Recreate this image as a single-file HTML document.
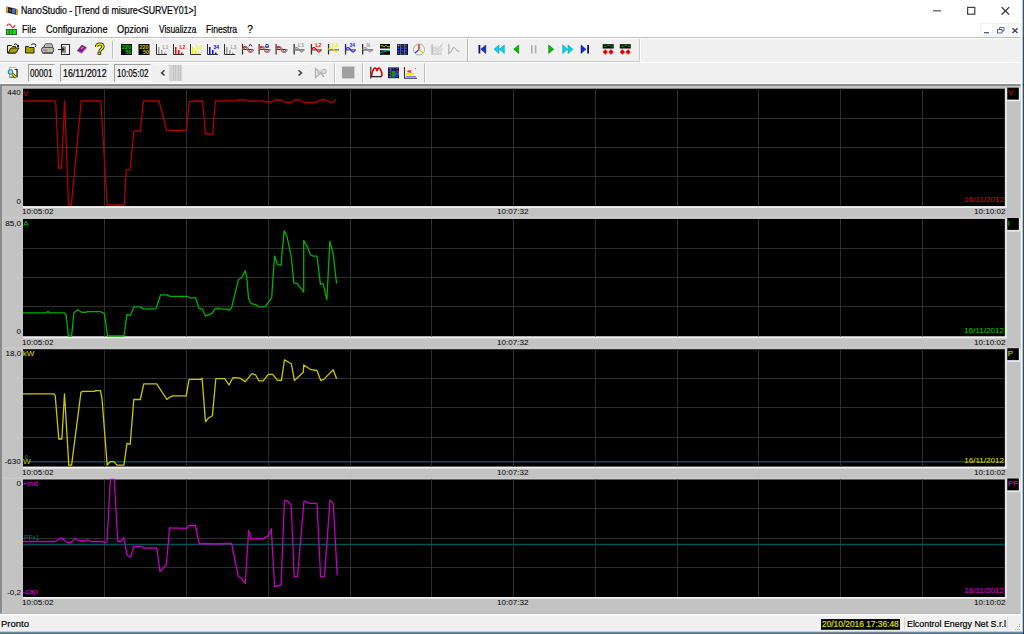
<!DOCTYPE html><html><head><meta charset="utf-8"><style>
html,body{margin:0;padding:0;}
body{width:1024px;height:634px;overflow:hidden;position:relative;background:#f0f0f0;font-family:'Liberation Sans', sans-serif;}
.t{position:absolute;white-space:nowrap;line-height:1;transform-origin:0 0;}
.u{-webkit-text-stroke:0.2px currentColor;}
.r{position:absolute;}
svg{position:absolute;left:0;top:0;}
</style></head><body>
<div class="r" style="left:0px;top:0px;width:1024px;height:37px;background:#ffffff;"></div>
<div class="r" style="left:0px;top:37px;width:1024px;height:1px;background:#bdbdbd;"></div>
<div class="r" style="left:0px;top:38px;width:1024px;height:1px;background:#ffffff;"></div>
<svg width="24" height="40" style="left:0;top:0"><path d="M6.6 6.6 L18 9.2 L17.6 15 L6.3 12.4 z" fill="#181818"/><path d="M6.6 6.6 L8.2 7 L7.9 12.8 L6.3 12.4 z" fill="#e8a010"/><path d="M16.4 8.8 L18 9.2 L17.6 15 L16 14.6 z" fill="#f0c020"/><path d="M12 8.5 L15.6 9.3 L15.3 13.8 L11.8 13 z" fill="#4a70d0"/><path d="M9 9 h2 v3 h-2 z" fill="#505030"/><path d="M6.8 26 Q8.3 23 10 24.5 L12 27 Q13.5 28.6 15 25" stroke="#f02020" stroke-width="1.1" fill="none"/><rect x="6" y="29" width="11" height="6" fill="#404040"/><rect x="6.8" y="29.8" width="9.4" height="4.4" fill="#10e010"/><path d="M9.2 30.2 v3.6 M12.2 30.2 v3.6" stroke="#083008" stroke-width="0.7"/></svg>
<svg width="100" height="40" style="left:924px;top:0"><rect x="9" y="10.2" width="8" height="1.2" fill="#505050"/><rect x="43.6" y="7.4" width="7.2" height="6.8" fill="none" stroke="#404040" stroke-width="1.2"/><path d="M77.6 7.2 L85.2 14.6 M85.2 7.2 L77.6 14.6" stroke="#202020" stroke-width="1.15"/></svg>
<div class="r" style="left:980px;top:23px;width:13px;height:13px;background:#ffffff;box-shadow: inset 0 0 0 1px #f0f0f0;"></div>
<div class="r" style="left:994px;top:23px;width:13px;height:13px;background:#ffffff;box-shadow: inset 0 0 0 1px #f0f0f0;"></div>
<div class="r" style="left:1008px;top:23px;width:13px;height:13px;background:#ffffff;box-shadow: inset 0 0 0 1px #f0f0f0;"></div>
<svg width="44" height="16" style="left:980px;top:22px"><rect x="4" y="10" width="5" height="1.3" fill="#4a5a7a"/><rect x="17.5" y="7.5" width="4.5" height="3.5" fill="none" stroke="#5a6a8a" stroke-width="1"/><path d="M19.5 7.5 V5.5 H24 V9 H22" fill="none" stroke="#5a6a8a" stroke-width="1"/><path d="M32.5 6.3 L37.5 11 M37.5 6.3 L32.5 11" stroke="#3a4a6a" stroke-width="1.5"/></svg>
<div class="r" style="left:0px;top:60.8px;width:639px;height:1px;background:#c8c8c8;"></div>
<div class="r" style="left:0px;top:61.8px;width:1024px;height:1.2px;background:#ffffff;"></div>
<div class="r" style="left:639px;top:39px;width:1px;height:22px;background:#c8c8c8;"></div>
<div class="r" style="left:640px;top:39px;width:1px;height:22px;background:#ffffff;"></div>
<div class="r" style="left:112px;top:41px;width:1px;height:18px;background:#c0c0c0;"></div>
<div class="r" style="left:113px;top:41px;width:1px;height:18px;background:#ffffff;"></div>
<div class="r" style="left:467px;top:39px;width:1px;height:22px;background:#b8b8b8;"></div>
<div class="r" style="left:468px;top:39px;width:1px;height:22px;background:#ffffff;"></div>
<div class="r" style="left:0px;top:83px;width:1024px;height:1px;background:#ffffff;"></div>
<div class="r" style="left:334px;top:63px;width:1px;height:20px;background:#c0c0c0;"></div>
<div class="r" style="left:335px;top:63px;width:1px;height:20px;background:#ffffff;"></div>
<div class="r" style="left:362px;top:63px;width:1px;height:20px;background:#c0c0c0;"></div>
<div class="r" style="left:363px;top:63px;width:1px;height:20px;background:#ffffff;"></div>
<div class="r" style="left:424px;top:63px;width:1px;height:20px;background:#c0c0c0;"></div>
<div class="r" style="left:425px;top:63px;width:1px;height:20px;background:#ffffff;"></div>
<div class="r" style="left:28px;top:64px;width:27px;height:18px;background:#f0f0f0;box-sizing:border-box;border-top:1.3px solid #a0a0a0;border-left:1.3px solid #a0a0a0;border-right:1px solid #fff;border-bottom:1px solid #fff;"></div>
<div class="r" style="left:60px;top:64px;width:49px;height:18px;background:#f0f0f0;box-sizing:border-box;border-top:1.3px solid #a0a0a0;border-left:1.3px solid #a0a0a0;border-right:1px solid #fff;border-bottom:1px solid #fff;"></div>
<div class="r" style="left:114px;top:64px;width:37px;height:18px;background:#f0f0f0;box-sizing:border-box;border-top:1.3px solid #a0a0a0;border-left:1.3px solid #a0a0a0;border-right:1px solid #fff;border-bottom:1px solid #fff;"></div>
<div class="r" style="left:157px;top:64px;width:152px;height:18px;background:#f0f0f0;"></div>
<div class="r" style="left:169.4px;top:65.4px;width:12.5px;height:15.4px;background:#cfcfcf;background-image:repeating-linear-gradient(90deg,#d4d4d4 0,#d4d4d4 1.6px,#c4c4c4 1.6px,#c4c4c4 2.4px);"></div>
<div class="r" style="left:157px;top:64.3px;width:152px;height:0.8px;background:#f8f8f8;"></div>
<svg width="160" height="20" style="left:155px;top:63px"><path d="M9.6 7.3 L6.6 9.9 L9.6 12.5" stroke="#404040" stroke-width="1.5" fill="none"/><path d="M143.5 7.3 L146.5 9.9 L143.5 12.5" stroke="#404040" stroke-width="1.5" fill="none"/></svg>
<svg width="1024" height="90" style="left:0;top:0"><path d="M7.5 45.5 h4 l1 1 h3 v6.5 h-8 z" fill="#f0e890" stroke="#202020" stroke-width="1"/><path d="M8 53 l3 -5 h8 l-3 5 z" fill="#a8a000" stroke="#202020" stroke-width="1"/><path d="M14 44.5 q2 -1.5 3.5 0.5" stroke="#202020" stroke-width="1" fill="none"/><rect x="17" y="45" width="2" height="2" fill="#202020"/><path d="M25.5 46.5 h3 l1 1 h4.5 v5.5 h-8.5 z" fill="#a8a000" stroke="#202020" stroke-width="1"/><path d="M31 45 q2 -2 4 -1 q1.5 1 0.5 3" stroke="#202020" stroke-width="1" fill="none"/><path d="M43.5 47.5 L45.5 43.8 H51.8 L53 47.5 z" fill="#d8d8d8" stroke="#505050" stroke-width="1"/><path d="M46 45.2 h5" stroke="#909090" stroke-width="0.8"/><rect x="41.6" y="47.3" width="12" height="5.4" rx="2" fill="#b8b8b8" stroke="#404040" stroke-width="1"/><rect x="43.5" y="49.6" width="2" height="1" fill="#e04040"/><rect x="45.5" y="49.6" width="2" height="1" fill="#4060e0"/><rect x="47.5" y="49.6" width="2.5" height="1" fill="#e0d000"/><rect x="42.5" y="52.6" width="10.5" height="1.4" fill="#606060"/><path d="M61.5 44.5 h8 v10 h-8 z" fill="#f8f8f8" stroke="#303030" stroke-width="1.1"/><path d="M62.5 45.5 l3.5 1.5 v6.5 l-3.5 -0.5 z" fill="#8a8a8a"/><path d="M58 49.5 h5.5 M61.5 47.2 l2.3 2.3 l-2.3 2.3" stroke="#202020" stroke-width="1.1" fill="none"/><path d="M58 48 h3" stroke="#ffffff" stroke-width="0.6"/><path d="M77.3 50.8 L82 45.2 L86.4 47.8 L81.6 53.2 z" fill="#8a10a8" stroke="#4a0060" stroke-width="0.7"/><path d="M77.5 51.2 L81.6 53.4 L86.2 48.2" stroke="#d8a8e0" stroke-width="0.9" fill="none"/><path d="M81 48.8 L83.6 47.2" stroke="#e8a030" stroke-width="1.3"/><path d="M96.6 47 q0 -3 3.2 -3 q3.2 0 3.2 2.8 q0 1.6 -1.8 2.4 q-1.2 0.6 -1.2 2.2" stroke="#202000" stroke-width="3.2" fill="none"/><path d="M96.6 47 q0 -3 3.2 -3 q3.2 0 3.2 2.8 q0 1.6 -1.8 2.4 q-1.2 0.6 -1.2 2.2" stroke="#f0f000" stroke-width="1.6" fill="none"/><rect x="98" y="52.2" width="2.8" height="2.2" fill="#f0f000" stroke="#202000" stroke-width="0.8"/><rect x="121" y="44" width="11" height="11" fill="#000"/><text x="126.5" y="49" font-size="5.5" font-weight="bold" fill="#00e000" text-anchor="middle" font-family="Liberation Sans">220</text><text x="131.5" y="54.3" font-size="5.5" font-weight="bold" fill="#00e000" text-anchor="end" font-family="Liberation Sans">50</text><rect x="138.5" y="44" width="11" height="11" fill="#000"/><text x="144.0" y="49" font-size="5.5" font-weight="bold" fill="#d0c800" text-anchor="middle" font-family="Liberation Sans">220</text><text x="149.0" y="54.3" font-size="5.5" font-weight="bold" fill="#d0c800" text-anchor="end" font-family="Liberation Sans">50</text><path d="M156.5 44 V54.5 H167" stroke="#303030" stroke-width="1" fill="none"/><rect x="158" y="47" width="1.5" height="7" fill="#a0a0a0"/><rect x="161" y="50" width="1.5" height="4" fill="#a0a0a0"/><rect x="164" y="52.5" width="1.5" height="1.5" fill="#a0a0a0"/><text x="162.5" y="48.5" font-size="5" font-weight="bold" fill="#a0a0a0" font-family="Liberation Sans">L1</text><path d="M173.5 44 V54.5 H184" stroke="#303030" stroke-width="1" fill="none"/><rect x="175" y="47" width="1.5" height="7" fill="#ff0000"/><rect x="178" y="50" width="1.5" height="4" fill="#ff0000"/><rect x="181" y="52.5" width="1.5" height="1.5" fill="#ff0000"/><text x="179.5" y="48.5" font-size="5" font-weight="bold" fill="#ff0000" font-family="Liberation Sans">L2</text><path d="M190.5 44 V54.5 H201" stroke="#303030" stroke-width="1" fill="none"/><rect x="192" y="47" width="1.5" height="7" fill="#f0f000"/><rect x="195" y="50" width="1.5" height="4" fill="#f0f000"/><rect x="198" y="52.5" width="1.5" height="1.5" fill="#f0f000"/><text x="196.5" y="48.5" font-size="5" font-weight="bold" fill="#f0f000" font-family="Liberation Sans">L3</text><path d="M207.5 44 V54.5 H218" stroke="#303030" stroke-width="1" fill="none"/><rect x="209" y="47" width="1.5" height="7" fill="#0000ff"/><rect x="212" y="50" width="1.5" height="4" fill="#0000ff"/><rect x="215" y="52.5" width="1.5" height="1.5" fill="#0000ff"/><text x="213.5" y="48.5" font-size="5" font-weight="bold" fill="#0000ff" font-family="Liberation Sans">34</text><path d="M224.5 44 V54.5 H235" stroke="#303030" stroke-width="1" fill="none"/><rect x="226" y="47" width="1.5" height="7" fill="#a0a0a0"/><rect x="229" y="50" width="1.5" height="4" fill="#a0a0a0"/><rect x="232" y="52.5" width="1.5" height="1.5" fill="#a0a0a0"/><text x="230.5" y="48.5" font-size="5" font-weight="bold" fill="#a0a0a0" font-family="Liberation Sans">L3</text><rect x="241.9" y="44" width="1.2" height="10.5" fill="#303030"/><rect x="242.4" y="49" width="10.5" height="1" fill="#303030"/><path d="M242.4 49.5 q2.5 -6 5 0 t5 0" stroke="#f06000" stroke-width="1.3" fill="none"/><path d="M243.9 49.5 q2.5 -6 5 0 t5 0" stroke="#4060ff" stroke-width="1" fill="none" opacity="0.85"/><path d="M242.9 48 q1.5 -3 3 0" stroke="#e00000" stroke-width="1" fill="none"/><path d="M248.9 46.5 l1.5 -2.5 l1.5 2.5" stroke="#303080" stroke-width="1" fill="none"/><rect x="258.5" y="44" width="1.2" height="10.5" fill="#303030"/><rect x="259" y="49" width="10.5" height="1" fill="#303030"/><path d="M259 49.5 q2.5 -6 5 0 t5 0" stroke="#f06000" stroke-width="1.3" fill="none"/><path d="M260.5 49.5 q2.5 -6 5 0 t5 0" stroke="#4060ff" stroke-width="1" fill="none" opacity="0.85"/><path d="M259.5 48 q1.5 -3 3 0" stroke="#e00000" stroke-width="1" fill="none"/><circle cx="267" cy="45.8" r="1.5" fill="none" stroke="#303080" stroke-width="1"/><rect x="265" y="46.5" width="4" height="1" fill="#303080"/><rect x="275.5" y="44" width="1.2" height="10.5" fill="#303030"/><rect x="276" y="49" width="10.5" height="1" fill="#303030"/><path d="M276 49.5 q2.5 -6 5 0 t5 0" stroke="#f06000" stroke-width="1.3" fill="none"/><path d="M277.5 49.5 q2.5 -6 5 0 t5 0" stroke="#4060ff" stroke-width="1" fill="none" opacity="0.85"/><path d="M276.5 48 q1.5 -3 3 0" stroke="#e00000" stroke-width="1" fill="none"/><rect x="293.5" y="44" width="1.3" height="10.5" fill="#303030"/><rect x="294.1" y="49.3" width="10.5" height="1.2" fill="#505050"/><path d="M294.1 49.8 q2 -3.5 4 -1.5 q1 1 1.5 2 q2 3.5 4 0" stroke="#909090" stroke-width="1.2" fill="none"/><text x="298.1" y="47" font-size="5" font-weight="bold" fill="#909090" font-family="Liberation Sans">L1</text><rect x="310.79999999999995" y="44" width="1.3" height="10.5" fill="#303030"/><rect x="311.4" y="49.3" width="10.5" height="1.2" fill="#505050"/><path d="M311.4 49.8 q2 -3.5 4 -1.5 q1 1 1.5 2 q2 3.5 4 0" stroke="#ff0000" stroke-width="1.2" fill="none"/><text x="315.4" y="47" font-size="5" font-weight="bold" fill="#ff0000" font-family="Liberation Sans">L2</text><rect x="327.9" y="44" width="1.3" height="10.5" fill="#303030"/><rect x="328.5" y="49.3" width="10.5" height="1.2" fill="#505050"/><path d="M328.5 49.8 q2 -3.5 4 -1.5 q1 1 1.5 2 q2 3.5 4 0" stroke="#f0f000" stroke-width="1.2" fill="none"/><text x="332.5" y="47" font-size="5" font-weight="bold" fill="#f0f000" font-family="Liberation Sans">L3</text><rect x="344.9" y="44" width="1.3" height="10.5" fill="#303030"/><rect x="345.5" y="49.3" width="10.5" height="1.2" fill="#505050"/><path d="M345.5 49.8 q2 -3.5 4 -1.5 q1 1 1.5 2 q2 3.5 4 0" stroke="#2020ff" stroke-width="1.2" fill="none"/><text x="349.5" y="47" font-size="5" font-weight="bold" fill="#2020ff" font-family="Liberation Sans">34</text><rect x="362.0" y="44" width="1.3" height="10.5" fill="#303030"/><rect x="362.6" y="49.3" width="10.5" height="1.2" fill="#505050"/><path d="M362.6 49.8 q2 -3.5 4 -1.5 q1 1 1.5 2 q2 3.5 4 0" stroke="#a0a0a0" stroke-width="1.2" fill="none"/><text x="366.6" y="47" font-size="5" font-weight="bold" fill="#a0a0a0" font-family="Liberation Sans">N</text><rect x="380" y="44" width="10" height="4.5" fill="#000"/><rect x="380" y="50.3" width="10" height="4.5" fill="#000"/><path d="M380.5 45.8 h2.5 l1.2 1 l1.2 -1 h1.5 l1 1 h2" stroke="#e0e000" stroke-width="0.9" fill="none"/><path d="M380.5 53.5 l1 -1.5 h2 l0.8 -0.8 h2 l0.8 -0.7 h2.4" stroke="#00e0e0" stroke-width="0.9" fill="none"/><rect x="397" y="44" width="11" height="11" fill="#101010"/><rect x="397.5" y="44.7" width="2" height="1.6" fill="#a0a0a0"/><rect x="397.5" y="47.400000000000006" width="2" height="1.6" fill="#2040ff"/><rect x="397.5" y="50.2" width="2" height="1.6" fill="#2040ff"/><rect x="397.5" y="52.900000000000006" width="2" height="1.6" fill="#2040ff"/><rect x="401.5" y="44.7" width="2" height="1.6" fill="#2040ff"/><rect x="401.5" y="47.400000000000006" width="2" height="1.6" fill="#2040ff"/><rect x="401.5" y="50.2" width="2" height="1.6" fill="#2040ff"/><rect x="401.5" y="52.900000000000006" width="2" height="1.6" fill="#2040ff"/><rect x="405" y="44.7" width="2" height="1.6" fill="#2040ff"/><rect x="405" y="47.400000000000006" width="2" height="1.6" fill="#2040ff"/><rect x="405" y="50.2" width="2" height="1.6" fill="#2040ff"/><rect x="405" y="52.900000000000006" width="2" height="1.6" fill="#2040ff"/><rect x="400.3" y="44" width="0.8" height="11" fill="#808080"/><rect x="404.3" y="44" width="0.8" height="11" fill="#808080"/><circle cx="419" cy="49.5" r="5.5" fill="#f4f4f4" stroke="#a0a0a0" stroke-width="0.9"/><path d="M419 49.5 V44.5" stroke="#ff2020" stroke-width="1.6"/><path d="M419 49.5 L415 53" stroke="#2050ff" stroke-width="1.4"/><path d="M419 49.5 L423 53" stroke="#f0d000" stroke-width="1.4"/><rect x="431.5" y="44" width="1.2" height="11" fill="#b0b0b0"/><path d="M432 49 l2.5 -2 l2.5 3 l2.5 -3 l3 -2.5 M432 51 l3 -1 l2.5 2.5 l2.5 -2.5 l2.5 -1 M433 54 h9" stroke="#b8b8b8" stroke-width="1" fill="none"/><rect x="433" y="46" width="9" height="7" fill="#d8d8d8" opacity="0.6"/><path d="M448.8 44 V54.5" stroke="#b0b0b0" stroke-width="1.2"/><path d="M449 53 l2 -1 l2.5 -5 l2 1.5 l1.5 2.5 h2.5" stroke="#a8a8a8" stroke-width="1" fill="none"/><rect x="478.5" y="45" width="1.8" height="8.5" fill="#101060"/><path d="M485.8 45 v8.5 l-5 -4.25 z" fill="#1030d0" stroke="#101060" stroke-width="0.5"/><path d="M499 45 v8.5 l-5 -4.25 z" fill="#00d8e8" stroke="#008090" stroke-width="0.5"/><path d="M504.3 45 v8.5 l-5 -4.25 z" fill="#00d8e8" stroke="#008090" stroke-width="0.5"/><path d="M518.7 45 v8.5 l-5 -4.25 z" fill="#00c000" stroke="#006000" stroke-width="0.5"/><rect x="531" y="45.2" width="1.6" height="8.3" fill="#b0b0b0"/><rect x="534.8" y="45.2" width="1.6" height="8.3" fill="#b0b0b0"/><path d="M548.7 45 v8.5 l5 -4.25 z" fill="#00c000" stroke="#006000" stroke-width="0.5"/><path d="M562.7 45 v8.5 l5 -4.25 z" fill="#00d8e8" stroke="#008090" stroke-width="0.5"/><path d="M568 45 v8.5 l5 -4.25 z" fill="#00d8e8" stroke="#008090" stroke-width="0.5"/><path d="M581 45 v8.5 l5 -4.25 z" fill="#1030d0" stroke="#101060" stroke-width="0.5"/><rect x="587.2" y="45" width="1.8" height="8.5" fill="#101060"/><rect x="602.7" y="44.2" width="11" height="4.3" fill="#000"/><path d="M603.7 46.3 h3 l1 -1 h2 l1 1 h3" stroke="#00c000" stroke-width="0.9" fill="none"/><path d="M603.0 52 l2.3 -2.4 l2.3 2.4 l-2.3 2.4 z M608.7 52 l2.3 -2.4 l2.3 2.4 l-2.3 2.4 z" fill="#f00000" stroke="#d00000" stroke-width="0.6"/><rect x="619.8" y="44.2" width="11" height="4.3" fill="#000"/><path d="M620.8 46.3 h3 l1 -1 h2 l1 1 h3" stroke="#00c000" stroke-width="0.9" fill="none"/><path d="M620.0999999999999 52 l2.3 -2.4 l2.3 2.4 l-2.3 2.4 z M625.8 52 l2.3 -2.4 l2.3 2.4 l-2.3 2.4 z" fill="#f00000" stroke="#d00000" stroke-width="0.6"/><path d="M9.5 67.5 h6 l2 2 v8 h-8 z" fill="#ffffff" stroke="#b0b0b0" stroke-width="1"/><path d="M14.5 69.5 h2.5 v7.5" stroke="#202020" stroke-width="1.2" fill="none"/><rect x="9.5" y="76.5" width="5" height="1.2" fill="#707070"/><path d="M12.5 74 L16 77.5" stroke="#303000" stroke-width="2.6"/><path d="M12.5 74 L16 77.5" stroke="#d8d800" stroke-width="1.6"/><circle cx="10.5" cy="72" r="2.3" fill="#70f0f8" stroke="#204040" stroke-width="0.8"/><path d="M315.5 67.5 v11 M316 69 l4 3 l4 5 M316 77 l5 -4" stroke="#b0b0b0" stroke-width="1.3" fill="none"/><circle cx="324" cy="71.5" r="2.3" fill="#e0e0e0" stroke="#b0b0b0" stroke-width="1"/><rect x="317" y="71" width="3" height="3" fill="#c8c8c8"/><rect x="342.5" y="67" width="11.5" height="11" fill="#a0a0a0" stroke="#989898" stroke-width="0.8"/><path d="M370.8 66.8 V78.6 M371 76.6 H382" stroke="#202020" stroke-width="1.1" fill="none"/><path d="M371.5 76 Q372.5 69 375 68 Q376.5 68 377 71 Q377.5 68 379 68 Q381.5 69 382 76" stroke="#e00000" stroke-width="1.6" fill="none"/><rect x="388" y="67.4" width="11" height="10.8" fill="#181818"/><rect x="392" y="71" width="3.5" height="6.5" fill="#00a000"/><rect x="395.5" y="70.5" width="3.5" height="2" fill="#c00000"/><rect x="395.5" y="72.5" width="3.5" height="3" fill="#2040ff"/><rect x="388.7" y="67.9" width="1.6" height="1.2" fill="#3050ff"/><rect x="388.7" y="70.4" width="1.6" height="1.2" fill="#3050ff"/><rect x="388.7" y="72.9" width="1.6" height="1.2" fill="#3050ff"/><rect x="388.7" y="75.9" width="1.6" height="1.2" fill="#3050ff"/><rect x="392.7" y="67.9" width="1.6" height="1.2" fill="#3050ff"/><rect x="392.7" y="70.4" width="1.6" height="1.2" fill="#3050ff"/><rect x="392.7" y="72.9" width="1.6" height="1.2" fill="#3050ff"/><rect x="392.7" y="75.9" width="1.6" height="1.2" fill="#3050ff"/><rect x="396.2" y="67.9" width="1.6" height="1.2" fill="#3050ff"/><rect x="396.2" y="70.4" width="1.6" height="1.2" fill="#3050ff"/><rect x="396.2" y="72.9" width="1.6" height="1.2" fill="#3050ff"/><rect x="396.2" y="75.9" width="1.6" height="1.2" fill="#3050ff"/><rect x="390.5" y="67.4" width="0.8" height="10.8" fill="#909090"/><path d="M404.5 67 V78.3 H417" stroke="#303030" stroke-width="1.1" fill="none"/><path d="M407 72 q1 -3 2 -1 q1 -2 2 0 q0.5 1 0 2 z" fill="#ff2020"/><circle cx="415.5" cy="68.5" r="0.6" fill="#ff2020"/><rect x="409" y="70.5" width="1" height="1.5" fill="#ff4040"/><rect x="406" y="73" width="8" height="2.5" fill="#f0f000"/><rect x="406" y="76" width="10" height="1.5" fill="#8080ff"/></svg>
<div class="r" style="left:0px;top:84px;width:1024px;height:2px;background:#8c8c8c;"></div>
<div class="r" style="left:0px;top:86px;width:1022px;height:528px;background:#c3c3c3;"></div>
<div class="r" style="left:0px;top:86px;width:2px;height:528px;background:#8a8a8a;"></div>
<div class="r" style="left:2px;top:86px;width:1px;height:528px;background:#c8c8c8;"></div>
<svg width="1024" height="634" style="left:0;top:0"><rect x="23" y="88.70" width="981.8" height="117.5" fill="#000"/><rect x="1005.3" y="88.70" width="1.5" height="119.30" fill="#f0f0f0"/><rect x="23" y="206.20" width="983.8" height="1.8" fill="#f0f0f0"/><rect x="3" y="216.90" width="1017" height="1.5" fill="#cbcbcb"/><line x1="104.5" y1="88.70" x2="104.5" y2="206.20" stroke="#2e2e2e" stroke-width="1"/><line x1="186.5" y1="88.70" x2="186.5" y2="206.20" stroke="#2e2e2e" stroke-width="1"/><line x1="268.5" y1="88.70" x2="268.5" y2="206.20" stroke="#2e2e2e" stroke-width="1"/><line x1="350.5" y1="88.70" x2="350.5" y2="206.20" stroke="#2e2e2e" stroke-width="1"/><line x1="431.5" y1="88.70" x2="431.5" y2="206.20" stroke="#2e2e2e" stroke-width="1"/><line x1="513.5" y1="88.70" x2="513.5" y2="206.20" stroke="#2e2e2e" stroke-width="1"/><line x1="595.5" y1="88.70" x2="595.5" y2="206.20" stroke="#2e2e2e" stroke-width="1"/><line x1="677.5" y1="88.70" x2="677.5" y2="206.20" stroke="#2e2e2e" stroke-width="1"/><line x1="758.5" y1="88.70" x2="758.5" y2="206.20" stroke="#2e2e2e" stroke-width="1"/><line x1="840.5" y1="88.70" x2="840.5" y2="206.20" stroke="#2e2e2e" stroke-width="1"/><line x1="922.5" y1="88.70" x2="922.5" y2="206.20" stroke="#2e2e2e" stroke-width="1"/><line x1="23" y1="118.5" x2="1004.8" y2="118.5" stroke="#2e2e2e" stroke-width="1"/><line x1="23" y1="147.5" x2="1004.8" y2="147.5" stroke="#2e2e2e" stroke-width="1"/><line x1="23" y1="176.5" x2="1004.8" y2="176.5" stroke="#2e2e2e" stroke-width="1"/><rect x="1007.3" y="87.70" width="11.5" height="11.9" fill="#000"/><rect x="1007.3" y="99.90" width="13" height="1.3" fill="#f0f0f0"/><rect x="1019" y="87.70" width="1.3" height="12.2" fill="#f0f0f0"/><rect x="23" y="218.97" width="981.8" height="117.5" fill="#000"/><rect x="1005.3" y="218.97" width="1.5" height="119.30" fill="#f0f0f0"/><rect x="23" y="336.47" width="983.8" height="1.8" fill="#f0f0f0"/><rect x="3" y="347.17" width="1017" height="1.5" fill="#cbcbcb"/><line x1="104.5" y1="218.97" x2="104.5" y2="336.47" stroke="#2e2e2e" stroke-width="1"/><line x1="186.5" y1="218.97" x2="186.5" y2="336.47" stroke="#2e2e2e" stroke-width="1"/><line x1="268.5" y1="218.97" x2="268.5" y2="336.47" stroke="#2e2e2e" stroke-width="1"/><line x1="350.5" y1="218.97" x2="350.5" y2="336.47" stroke="#2e2e2e" stroke-width="1"/><line x1="431.5" y1="218.97" x2="431.5" y2="336.47" stroke="#2e2e2e" stroke-width="1"/><line x1="513.5" y1="218.97" x2="513.5" y2="336.47" stroke="#2e2e2e" stroke-width="1"/><line x1="595.5" y1="218.97" x2="595.5" y2="336.47" stroke="#2e2e2e" stroke-width="1"/><line x1="677.5" y1="218.97" x2="677.5" y2="336.47" stroke="#2e2e2e" stroke-width="1"/><line x1="758.5" y1="218.97" x2="758.5" y2="336.47" stroke="#2e2e2e" stroke-width="1"/><line x1="840.5" y1="218.97" x2="840.5" y2="336.47" stroke="#2e2e2e" stroke-width="1"/><line x1="922.5" y1="218.97" x2="922.5" y2="336.47" stroke="#2e2e2e" stroke-width="1"/><line x1="23" y1="248.5" x2="1004.8" y2="248.5" stroke="#2e2e2e" stroke-width="1"/><line x1="23" y1="277.5" x2="1004.8" y2="277.5" stroke="#2e2e2e" stroke-width="1"/><line x1="23" y1="306.5" x2="1004.8" y2="306.5" stroke="#2e2e2e" stroke-width="1"/><rect x="1007.3" y="217.97" width="11.5" height="11.9" fill="#000"/><rect x="1007.3" y="230.17" width="13" height="1.3" fill="#f0f0f0"/><rect x="1019" y="217.97" width="1.3" height="12.2" fill="#f0f0f0"/><rect x="23" y="349.24" width="981.8" height="117.5" fill="#000"/><rect x="1005.3" y="349.24" width="1.5" height="119.30" fill="#f0f0f0"/><rect x="23" y="466.74" width="983.8" height="1.8" fill="#f0f0f0"/><rect x="3" y="477.44" width="1017" height="1.5" fill="#cbcbcb"/><line x1="104.5" y1="349.24" x2="104.5" y2="466.74" stroke="#2e2e2e" stroke-width="1"/><line x1="186.5" y1="349.24" x2="186.5" y2="466.74" stroke="#2e2e2e" stroke-width="1"/><line x1="268.5" y1="349.24" x2="268.5" y2="466.74" stroke="#2e2e2e" stroke-width="1"/><line x1="350.5" y1="349.24" x2="350.5" y2="466.74" stroke="#2e2e2e" stroke-width="1"/><line x1="431.5" y1="349.24" x2="431.5" y2="466.74" stroke="#2e2e2e" stroke-width="1"/><line x1="513.5" y1="349.24" x2="513.5" y2="466.74" stroke="#2e2e2e" stroke-width="1"/><line x1="595.5" y1="349.24" x2="595.5" y2="466.74" stroke="#2e2e2e" stroke-width="1"/><line x1="677.5" y1="349.24" x2="677.5" y2="466.74" stroke="#2e2e2e" stroke-width="1"/><line x1="758.5" y1="349.24" x2="758.5" y2="466.74" stroke="#2e2e2e" stroke-width="1"/><line x1="840.5" y1="349.24" x2="840.5" y2="466.74" stroke="#2e2e2e" stroke-width="1"/><line x1="922.5" y1="349.24" x2="922.5" y2="466.74" stroke="#2e2e2e" stroke-width="1"/><line x1="23" y1="378.5" x2="1004.8" y2="378.5" stroke="#2e2e2e" stroke-width="1"/><line x1="23" y1="407.5" x2="1004.8" y2="407.5" stroke="#2e2e2e" stroke-width="1"/><line x1="23" y1="437.5" x2="1004.8" y2="437.5" stroke="#2e2e2e" stroke-width="1"/><rect x="1007.3" y="348.24" width="11.5" height="11.9" fill="#000"/><rect x="1007.3" y="360.44" width="13" height="1.3" fill="#f0f0f0"/><rect x="1019" y="348.24" width="1.3" height="12.2" fill="#f0f0f0"/><rect x="23" y="479.51" width="981.8" height="117.5" fill="#000"/><rect x="1005.3" y="479.51" width="1.5" height="119.30" fill="#f0f0f0"/><rect x="23" y="597.01" width="983.8" height="1.8" fill="#f0f0f0"/><line x1="104.5" y1="479.51" x2="104.5" y2="597.01" stroke="#2e2e2e" stroke-width="1"/><line x1="186.5" y1="479.51" x2="186.5" y2="597.01" stroke="#2e2e2e" stroke-width="1"/><line x1="268.5" y1="479.51" x2="268.5" y2="597.01" stroke="#2e2e2e" stroke-width="1"/><line x1="350.5" y1="479.51" x2="350.5" y2="597.01" stroke="#2e2e2e" stroke-width="1"/><line x1="431.5" y1="479.51" x2="431.5" y2="597.01" stroke="#2e2e2e" stroke-width="1"/><line x1="513.5" y1="479.51" x2="513.5" y2="597.01" stroke="#2e2e2e" stroke-width="1"/><line x1="595.5" y1="479.51" x2="595.5" y2="597.01" stroke="#2e2e2e" stroke-width="1"/><line x1="677.5" y1="479.51" x2="677.5" y2="597.01" stroke="#2e2e2e" stroke-width="1"/><line x1="758.5" y1="479.51" x2="758.5" y2="597.01" stroke="#2e2e2e" stroke-width="1"/><line x1="840.5" y1="479.51" x2="840.5" y2="597.01" stroke="#2e2e2e" stroke-width="1"/><line x1="922.5" y1="479.51" x2="922.5" y2="597.01" stroke="#2e2e2e" stroke-width="1"/><line x1="23" y1="508.5" x2="1004.8" y2="508.5" stroke="#2e2e2e" stroke-width="1"/><line x1="23" y1="538.5" x2="1004.8" y2="538.5" stroke="#2e2e2e" stroke-width="1"/><line x1="23" y1="567.5" x2="1004.8" y2="567.5" stroke="#2e2e2e" stroke-width="1"/><rect x="1007.3" y="478.51" width="11.5" height="11.9" fill="#000"/><rect x="1007.3" y="490.71" width="13" height="1.3" fill="#f0f0f0"/><rect x="1019" y="478.51" width="1.3" height="12.2" fill="#f0f0f0"/><polyline points="29.0,461.8 1005.0,461.8" fill="none" stroke="#005454" stroke-width="1.6" stroke-linejoin="round"/><polyline points="23.0,544.5 1005.0,544.5" fill="none" stroke="#005454" stroke-width="1.6" stroke-linejoin="round"/><polyline points="23.0,101.0 54.8,101.0 55.8,104.0 58.7,168.2 61.6,168.2 64.6,101.0 68.5,205.0 71.4,205.0 81.2,101.0 100.8,101.0 107.2,205.0 124.3,205.0 126.2,169.8 130.1,169.8 134.0,131.0 140.2,131.0 143.5,101.0 158.9,101.0 166.7,130.3 186.4,130.3 189.3,101.3 202.6,101.0 205.5,134.0 212.7,134.0 215.4,101.0 234.8,100.8 237.0,100.0 246.0,100.0 248.5,101.5 250.9,101.0 263.8,101.0 266.2,102.0 271.8,102.0 275.0,100.0 281.5,100.0 284.7,102.3 291.2,102.3 294.4,100.0 300.0,100.0 304.0,102.3 317.0,102.3 320.2,100.0 325.8,100.0 330.7,102.3 333.0,102.3 336.0,99.5" fill="none" stroke="#b00000" stroke-width="1.3" stroke-linejoin="round"/><polyline points="23.0,312.8 45.8,312.8 48.1,311.7 50.5,312.8 64.5,312.8 66.1,315.0 68.4,336.0 71.6,336.0 73.9,312.8 77.8,309.7 81.7,312.3 85.6,312.3 87.2,311.6 100.5,311.6 104.4,313.6 107.5,336.0 123.9,336.0 127.0,314.4 130.2,315.6 134.0,306.9 140.3,306.9 143.4,308.9 155.9,308.9 160.6,294.8 166.9,294.8 170.0,296.4 187.1,296.4 189.7,297.8 195.6,297.8 199.1,308.5 202.5,309.2 205.5,316.2 212.4,313.1 215.3,308.5 220.4,308.5 222.1,309.2 226.4,309.2 229.0,310.2 231.5,308.0 238.4,279.8 241.8,277.3 245.2,270.9 246.6,276.4 248.6,298.6 251.2,303.7 255.5,304.6 258.9,306.8 264.9,306.8 271.7,297.8 272.5,285.0 274.6,255.9 277.3,264.1 281.1,265.3 281.9,254.2 284.2,230.6 287.1,237.1 291.3,256.7 293.9,282.9 297.3,283.6 303.7,292.1 303.7,240.5 306.7,245.6 310.5,255.0 313.2,256.2 317.0,256.2 320.4,284.1 323.0,283.6 326.9,299.5 329.8,241.4 333.2,254.2 336.6,283.6" fill="none" stroke="#00b000" stroke-width="1.3" stroke-linejoin="round"/><polyline points="23.0,393.8 53.6,393.8 55.2,395.6 58.8,439.0 61.9,439.0 64.5,393.8 68.8,465.2 71.6,465.2 80.9,392.5 82.5,391.4 94.2,391.4 95.8,390.6 100.5,390.6 102.0,398.8 107.2,465.2 110.3,461.6 113.8,461.6 116.9,465.2 123.9,465.2 127.0,443.3 130.2,444.4 133.8,399.5 140.3,399.5 143.8,383.9 156.7,383.9 166.9,399.5 169.2,397.5 172.6,395.8 186.2,395.8 189.1,379.4 200.8,379.4 202.1,378.2 205.5,421.8 208.5,418.0 212.4,415.8 215.8,378.7 224.7,378.7 229.0,385.0 232.9,377.7 240.1,378.2 245.2,381.6 252.0,373.6 255.5,374.8 258.9,380.8 263.1,380.8 268.3,374.3 272.5,374.3 277.7,380.4 281.4,380.4 284.5,359.9 291.3,363.7 294.4,380.4 303.3,372.2 303.7,365.0 311.0,369.7 317.0,370.5 320.7,380.4 323.8,379.4 333.2,369.7 336.6,378.7" fill="none" stroke="#c8c800" stroke-width="1.3" stroke-linejoin="round"/><polyline points="23.0,541.5 55.2,541.5 60.1,538.2 62.0,538.2 66.9,542.5 71.2,542.5 74.8,538.6 78.7,540.5 83.6,541.0 87.5,540.0 90.4,541.5 102.2,541.5 105.1,542.9 107.0,541.0 110.4,479.5 114.3,479.5 117.8,541.5 120.7,541.5 123.7,537.6 127.2,555.2 130.5,557.2 133.8,546.4 141.7,546.4 143.6,548.0 156.9,548.0 159.9,571.5 166.3,565.0 169.6,527.8 186.6,528.4 189.2,525.5 195.4,525.5 199.3,544.0 204.2,543.5 214.0,544.0 227.7,543.5 231.6,543.5 238.4,576.7 241.4,578.1 245.3,583.5 248.6,530.4 251.1,538.6 262.9,538.6 267.8,536.2 271.3,528.8 274.6,586.5 281.1,585.1 284.4,500.4 287.3,501.0 291.2,505.3 294.2,576.7 297.5,576.7 304.0,501.0 309.8,503.4 317.0,503.4 320.6,576.7 324.5,576.7 330.0,499.9 333.3,503.8 337.2,575.3" fill="none" stroke="#c000c0" stroke-width="1.3" stroke-linejoin="round"/></svg>
<div class="r" style="left:0px;top:612.8px;width:1021px;height:0.8px;background:#b8b8b8;"></div>
<div class="r" style="left:0px;top:613.5px;width:1021px;height:1.6px;background:#ffffff;"></div>
<div class="r" style="left:0px;top:615.1px;width:1021px;height:1.4px;background:#f6f6f6;"></div>
<div class="r" style="left:0px;top:616.5px;width:1021px;height:14px;background:#f0f0f0;"></div>
<div class="r" style="left:821px;top:619px;width:79px;height:11px;background:#000;"></div>
<div class="r" style="left:904px;top:617px;width:1px;height:13px;background:#d8d8d8;"></div>
<div class="r" style="left:1007.3px;top:617px;width:1px;height:13px;background:#d8d8d8;"></div>
<div class="r" style="left:1019.3px;top:624px;width:1.2px;height:1.2px;background:#a8a8a8;"></div>
<div class="r" style="left:1017px;top:626.3px;width:1.2px;height:1.2px;background:#a8a8a8;"></div>
<div class="r" style="left:1019.3px;top:626.3px;width:1.2px;height:1.2px;background:#a8a8a8;"></div>
<div class="r" style="left:1014.8px;top:628.8px;width:1.2px;height:1.2px;background:#a8a8a8;"></div>
<div class="r" style="left:1017px;top:628.8px;width:1.2px;height:1.2px;background:#a8a8a8;"></div>
<div class="r" style="left:1019.3px;top:628.8px;width:1.2px;height:1.2px;background:#a8a8a8;"></div>
<svg width="1024" height="634" style="left:0;top:0"><rect x="0" y="629.8" width="1024" height="1" fill="#fff4ea"/><rect x="0" y="630.8" width="1024" height="1" fill="#b8e0ff"/><rect x="0" y="631.8" width="1024" height="0.9" fill="#6898c8"/><rect x="0" y="632.7" width="1024" height="0.6" fill="#2a3a48"/><rect x="0" y="633.3" width="1024" height="0.7" fill="#6a3c0a"/><rect x="1020.7" y="0" width="1.5" height="630.8" fill="#fff8ee"/><rect x="1022.2" y="0" width="0.8" height="632" fill="#88c4f8"/><rect x="1023" y="0" width="0.4" height="632" fill="#3a6088"/><rect x="1023.4" y="0" width="0.6" height="634" fill="#000"/></svg>
<div class="t u" style="left:21.28px;top:6.27px;font-size:10.17px;color:#000;transform:scaleX(0.864);">NanoStudio - [Trend di misure&lt;SURVEY01&gt;]</div>
<div class="t u" style="left:21.70px;top:25.18px;font-size:10.17px;color:#000;transform:scaleX(0.854);">File</div>
<div class="t u" style="left:45.96px;top:25.19px;font-size:10.17px;color:#000;transform:scaleX(0.900);">Configurazione</div>
<div class="t u" style="left:116.92px;top:25.19px;font-size:10.17px;color:#000;transform:scaleX(0.912);">Opzioni</div>
<div class="t u" style="left:158.98px;top:25.18px;font-size:10.17px;color:#000;transform:scaleX(0.819);">Visualizza</div>
<div class="t u" style="left:206.13px;top:25.18px;font-size:10.17px;color:#000;transform:scaleX(0.846);">Finestra</div>
<div class="t " style="left:247.19px;top:25.07px;font-size:10.20px;color:#000;-webkit-text-stroke:0.2px #000;">?</div>
<div class="t u" style="left:29.60px;top:67.82px;font-size:10.89px;color:#000;transform:scaleX(0.740);">00001</div>
<div class="t u" style="left:62.84px;top:68.14px;font-size:10.89px;color:#000;transform:scaleX(0.812);">16/11/2012</div>
<div class="t u" style="left:117.19px;top:67.82px;font-size:10.89px;color:#000;transform:scaleX(0.741);">10:05:02</div>
<div class="t " style="left:7.34px;top:89.49px;font-size:8.10px;color:#000;">440</div>
<div class="t " style="left:16.62px;top:198.33px;font-size:8.10px;color:#000;">0</div>
<div class="t " style="left:23.08px;top:89.89px;font-size:8.10px;color:#e00000;">V</div>
<div class="t " style="left:1008.12px;top:89.13px;font-size:8.10px;color:#e00000;">V</div>
<div class="t " style="left:964.20px;top:196.48px;font-size:8.10px;color:#e00000;">16/11/2012</div>
<div class="t " style="left:22.02px;top:208.49px;font-size:8.10px;color:#000;">10:05:02</div>
<div class="t " style="left:497.02px;top:208.49px;font-size:8.10px;color:#000;">10:07:32</div>
<div class="t " style="left:973.89px;top:208.49px;font-size:8.10px;color:#000;">10:10:02</div>
<div class="t " style="left:5.36px;top:220.26px;font-size:8.10px;color:#000;">85,0</div>
<div class="t " style="left:16.62px;top:328.37px;font-size:8.10px;color:#000;">0</div>
<div class="t " style="left:23.17px;top:219.93px;font-size:8.10px;color:#00d000;">A</div>
<div class="t " style="left:1007.63px;top:220.19px;font-size:8.10px;color:#00d000;">I</div>
<div class="t " style="left:964.20px;top:326.52px;font-size:8.10px;color:#00d000;">16/11/2012</div>
<div class="t " style="left:22.02px;top:339.33px;font-size:8.10px;color:#000;">10:05:02</div>
<div class="t " style="left:497.02px;top:339.33px;font-size:8.10px;color:#000;">10:07:32</div>
<div class="t " style="left:973.89px;top:339.33px;font-size:8.10px;color:#000;">10:10:02</div>
<div class="t " style="left:5.38px;top:350.30px;font-size:8.10px;color:#000;">18,0</div>
<div class="t " style="left:4.65px;top:458.41px;font-size:8.10px;color:#000;">-630</div>
<div class="t " style="left:22.64px;top:349.89px;font-size:8.10px;color:#e0e000;">kW</div>
<div class="t " style="left:1007.87px;top:350.41px;font-size:8.10px;color:#e0e000;">P</div>
<div class="t " style="left:964.20px;top:456.56px;font-size:8.10px;color:#e0e000;">16/11/2012</div>
<div class="t " style="left:22.02px;top:469.37px;font-size:8.10px;color:#000;">10:05:02</div>
<div class="t " style="left:497.02px;top:469.37px;font-size:8.10px;color:#000;">10:07:32</div>
<div class="t " style="left:973.89px;top:469.37px;font-size:8.10px;color:#000;">10:10:02</div>
<div class="t " style="left:16.60px;top:480.41px;font-size:8.10px;color:#000;">0</div>
<div class="t " style="left:7.16px;top:589.18px;font-size:8.10px;color:#000;">-0,2</div>
<div class="t " style="left:1007.94px;top:480.45px;font-size:8.10px;color:#e000e0;">PF</div>
<div class="t " style="left:964.20px;top:586.60px;font-size:8.10px;color:#e000e0;">16/11/2012</div>
<div class="t " style="left:22.02px;top:599.41px;font-size:8.10px;color:#000;">10:05:02</div>
<div class="t " style="left:497.02px;top:599.41px;font-size:8.10px;color:#000;">10:07:32</div>
<div class="t " style="left:973.89px;top:599.41px;font-size:8.10px;color:#000;">10:10:02</div>
<div class="t " style="left:23.08px;top:457.95px;font-size:8.10px;color:#d0d000;">W</div>
<div class="t " style="left:24.65px;top:453.66px;font-size:6.20px;color:#008888;">0</div>
<div class="t " style="left:22.39px;top:480.10px;font-size:8.10px;color:#e000e0;">+ind</div>
<div class="t " style="left:22.34px;top:588.25px;font-size:8.10px;color:#e000e0;">-cap</div>
<div class="t " style="left:24.09px;top:535.46px;font-size:6.50px;color:#007a7a;">PFx1</div>
<div class="t u" style="left:0.90px;top:618.75px;font-size:9.88px;color:#000;transform:scaleX(0.961);">Pronto</div>
<div class="t u" style="left:821.98px;top:618.88px;font-size:9.74px;color:#e0e000;transform:scaleX(0.859);">20/10/2016 17:36:48</div>
<div class="t u" style="left:906.99px;top:618.74px;font-size:9.74px;color:#000;transform:scaleX(0.909);">Elcontrol Energy Net S.r.l</div>
</body></html>
